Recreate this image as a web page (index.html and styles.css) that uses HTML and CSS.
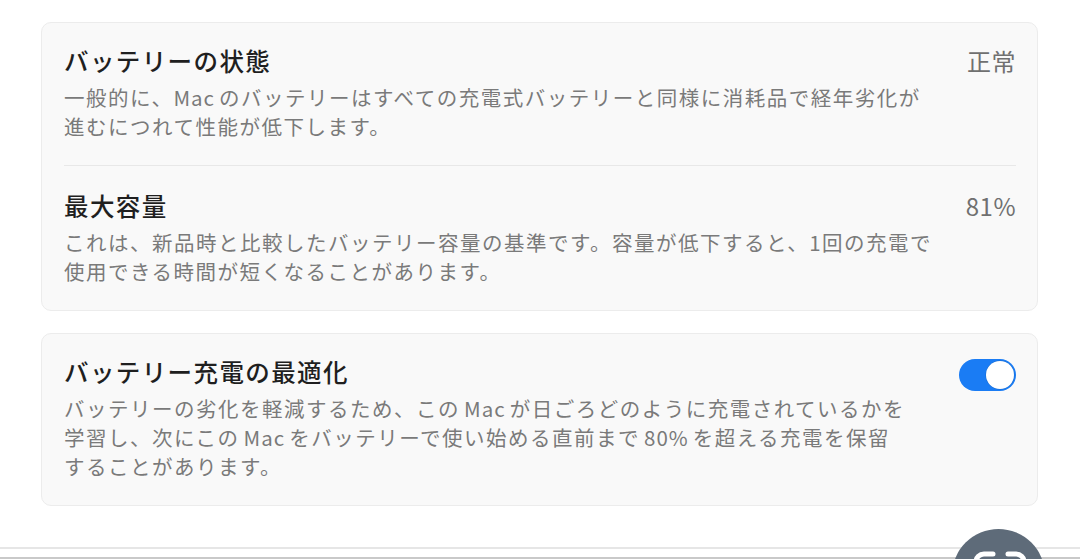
FILE: index.html
```html
<!DOCTYPE html>
<html lang="ja">
<head>
<meta charset="utf-8">
<link rel="stylesheet" href="styles.css">
</head>
<body>
<div class="page">
  <main class="content">
    <section class="card">
      <div class="row">
        <div class="text">
          <div class="title">バッテリーの状態</div>
          <div class="desc">一般的に、<span class="latin first">Mac</span>のバッテリーはすべての充電式バッテリーと同様に消耗品で経年劣化が<br>進むにつれて性能が低下します。</div>
        </div>
        <div class="value">正常</div>
      </div>
      <div class="divider"></div>
      <div class="row">
        <div class="text">
          <div class="title">最大容量</div>
          <div class="desc">これは、新品時と比較したバッテリー容量の基準です。容量が低下すると、1回の充電で<br>使用できる時間が短くなることがあります。</div>
        </div>
        <div class="value">81%</div>
      </div>
    </section>
    <section class="card">
      <div class="row">
        <div class="text">
          <div class="title">バッテリー充電の最適化</div>
          <div class="desc">バッテリーの劣化を軽減するため、この<span class="latin">Mac</span>が日ごろどのように充電されているかを<br>学習し、次にこの<span class="latin">Mac</span>をバッテリーで使い始める直前まで<span class="latin">80%</span>を超える充電を保留<br>することがあります。</div>
        </div>
        <div class="toggle"><span class="knob"></span></div>
      </div>
    </section>
  </main>
  <footer class="bottom"></footer>
  <div class="fab">
    <svg width="93" height="93" viewBox="0 0 93 93">
      <path d="M41 25 h-9 a8 8 0 0 0 -8 8 v10" fill="none" stroke="#fff" stroke-width="5" stroke-linecap="round"/>
      <path d="M56 25 h8 a8 8 0 0 1 8 8 v10" fill="none" stroke="#fff" stroke-width="5" stroke-linecap="round"/>
    </svg>
  </div>
</div>
</body>
</html>
```
FILE: styles.css
```css
* { box-sizing: border-box; }
html, body {
  margin: 0;
  padding: 0;
  background: #ffffff;
}
body {
  font-family: "Noto Sans CJK JP", "Noto Sans", sans-serif;
  overflow: hidden;
}
.page {
  position: relative;
  width: 1080px;
  height: 559px;
  overflow: hidden;
}
.content {
  padding: 22px 42px 0 41px;
  display: flex;
  flex-direction: column;
  gap: 22px;
}
.card {
  background: #f9f9f9;
  border: 1px solid #ececec;
  border-radius: 10px;
  padding: 0 21px 0 22px;
}
.row {
  display: flex;
  justify-content: space-between;
  align-items: flex-start;
  padding: 21px 0 24px;
}
.divider {
  height: 1px;
  background: #e8e8e8;
}
.divider + .row {
  padding-top: 23px;
}
.title {
  font-size: 24.5px;
  letter-spacing: 1.4px;
  line-height: 34px;
  color: #1f1f1f;
  margin-bottom: 5px;
  font-weight: 500;
}
.desc {
  font-size: 20.5px;
  letter-spacing: 1.5px;
  line-height: 29px;
  color: #7a7a7a;
}
.latin {
  margin: 0 4px;
  letter-spacing: 1px;
}
.latin.first {
  margin-left: 0;
}
.value {
  font-size: 24px;
  line-height: 34px;
  color: #707070;
  letter-spacing: 0.5px;
}
.toggle {
  margin-top: 4px;
  width: 57px;
  height: 32px;
  border-radius: 16px;
  background: #1a7cf4;
  display: flex;
  justify-content: flex-end;
  align-items: center;
  padding: 2px;
}
.knob {
  width: 28px;
  height: 28px;
  border-radius: 50%;
  background: #ffffff;
  box-shadow: 0 0 0 0.5px rgba(0,0,0,0.15);
}
.bottom {
  position: absolute;
  left: 0;
  right: 0;
  top: 547px;
  height: 12px;
  border-top: 2px solid #e6e6e6;
  border-bottom: 2px solid #c9c9c9;
  background: #ffffff;
}
.fab {
  position: absolute;
  left: 952px;
  top: 529px;
  width: 93px;
  height: 93px;
  border-radius: 50%;
  background: #5e6b79;
}
.fab svg { display: block; }
```
